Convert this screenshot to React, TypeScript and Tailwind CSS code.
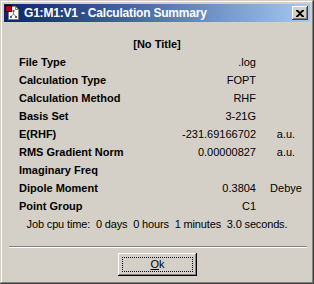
import React from 'react'

const rows: [string, string, string][] = [
  ['File Type', '.log', ''],
  ['Calculation Type', 'FOPT', ''],
  ['Calculation Method', 'RHF', ''],
  ['Basis Set', '3-21G', ''],
  ['E(RHF)', '-231.69166702', 'a.u.'],
  ['RMS Gradient Norm', '0.00000827', 'a.u.'],
  ['Imaginary Freq', '', ''],
  ['Dipole Moment', '0.3804', 'Debye'],
  ['Point Group', 'C1', ''],
]

const FileIcon = () => (
  <svg width="16" height="16" viewBox="0 0 16 16" className="shrink-0">
    <path d="M3.5 1.5h7l3 3v10h-10z" fill="#fff" stroke="#808080" />
    <path d="M10.5 1.5v3h3" fill="none" stroke="#808080" />
    <g stroke="#808080" strokeWidth="1">
      <line x1="8.5" y1="6" x2="8.5" y2="9" />
      <line x1="8.5" y1="9" x2="6" y2="11.5" />
      <line x1="8.5" y1="9" x2="11" y2="11.5" />
    </g>
    <rect x="7.5" y="5" width="2" height="2" fill="#606060" />
    <rect x="5" y="11" width="2" height="2" fill="#606060" />
    <rect x="10" y="11" width="2" height="2" fill="#606060" />
    <rect x="0.5" y="0.5" width="6" height="6" fill="#c00000" stroke="#000" />
  </svg>
)

const App = () => {
  return (
    <div className="w-[314px] h-[284px] bg-[#d4d0c8] p-[4px] flex flex-col text-black shadow-[inset_-1px_-1px_#404040,inset_1px_1px_#d4d0c8,inset_-2px_-2px_#808080,inset_2px_2px_#ffffff]" style={{ fontFamily: '"Liberation Sans", Arial, sans-serif' }}>
      {/* title bar */}
      <div className="h-[18px] flex items-center pl-[1px] pr-[2px] bg-gradient-to-r from-[#0a246a] to-[#a6caf0]">
        <FileIcon />
        <span className="ml-[3px] text-[12px] font-bold text-white leading-none whitespace-nowrap tracking-[-0.2px]">G1:M1:V1 - Calculation Summary</span>
        <div className="ml-auto w-[16px] h-[14px] bg-[#d4d0c8] flex items-center justify-center shadow-[inset_-1px_-1px_#404040,inset_1px_1px_#ffffff,inset_-2px_-2px_#808080]">
          <svg width="8" height="7" viewBox="0 0 8 7">
            <path d="M0 0h2l2 2 2-2h2v1L5 3.5 8 6v1H6L4 5 2 7H0V6l3-2.5L0 1z" fill="#000" />
          </svg>
        </div>
      </div>

      {/* body */}
      <div className="mt-[13px] h-[18px] flex items-center justify-center text-[11px] font-bold">[No Title]</div>
      <div className="grid grid-cols-[140px_91px_48px] gap-x-[6px] pl-[15px] text-[11px]">
        {rows.map(([label, value, unit]) => (
          <React.Fragment key={label}>
            <div className="h-[18px] flex items-center font-bold whitespace-nowrap">{label}</div>
            <div className="h-[18px] flex items-center justify-end whitespace-nowrap">{value}</div>
            <div className="h-[18px] flex items-center justify-center whitespace-nowrap">{unit}</div>
          </React.Fragment>
        ))}
      </div>
      <div className="h-[18px] flex items-center justify-center text-[11px] whitespace-pre tracking-[-0.15px]">
        {'Job cpu time:  0 days  0 hours  1 minutes  3.0 seconds.'}
      </div>

      {/* separator */}
      <div className="mt-[13px] ml-[5px] mr-[3px] border-t border-t-[#808080] border-b border-b-white" />

      {/* button */}
      <div className="mt-[5px] flex justify-center">
        <button className="w-[79px] h-[23px] ml-[1px] bg-[#d4d0c8] p-[4px] shadow-[inset_-1px_-1px_#000000,inset_1px_1px_#ffffff,inset_-2px_-2px_#808080]">
          <div className="w-full h-full border border-dotted border-black flex items-center justify-center text-[11px] leading-none">
            <span><span className="underline">O</span>k</span>
          </div>
        </button>
      </div>
    </div>
  )
}

export default App
